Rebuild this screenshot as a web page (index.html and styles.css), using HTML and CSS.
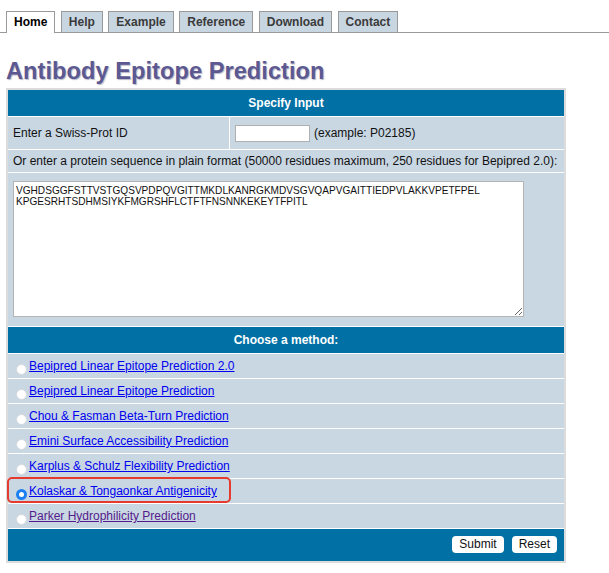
FILE: index.html
```html
<!DOCTYPE html>
<html>
<head>
<meta charset="utf-8">
<title>Antibody Epitope Prediction</title>
<link rel="stylesheet" href="styles.css">
</head>
<body>
<nav class="tabs">
  <a class="tab active">Home</a>
  <a class="tab">Help</a>
  <a class="tab">Example</a>
  <a class="tab">Reference</a>
  <a class="tab">Download</a>
  <a class="tab">Contact</a>
</nav>
<h1 class="title">Antibody Epitope Prediction</h1>
<form class="panel">
  <div class="bar">Specify Input</div>
  <div class="row split">
    <div class="cell label">Enter a Swiss-Prot ID</div>
    <div class="cell field"><input class="idbox" type="text"><span>(example: P02185)</span></div>
  </div>
  <div class="row note">Or enter a protein sequence in plain format (50000 residues maximum, 250 residues for Bepipred 2.0):</div>
  <div class="row seqrow"><textarea class="seq">VGHDSGGFSTTVSTGQSVPDPQVGITTMKDLKANRGKMDVSGVQAPVGAITTIEDPVLAKKVPETFPEL
KPGESRHTSDHMSIYKFMGRSHFLCTFTFNSNNKEKEYTFPITL</textarea></div>
  <div class="bar bar2">Choose a method:</div>
  <label class="row method"><input type="radio" name="m"><a href="#">Bepipred Linear Epitope Prediction 2.0</a></label>
  <label class="row method"><input type="radio" name="m"><a href="#">Bepipred Linear Epitope Prediction</a></label>
  <label class="row method"><input type="radio" name="m"><a href="#">Chou &amp; Fasman Beta-Turn Prediction</a></label>
  <label class="row method"><input type="radio" name="m"><a href="#">Emini Surface Accessibility Prediction</a></label>
  <label class="row method"><input type="radio" name="m"><a href="#">Karplus &amp; Schulz Flexibility Prediction</a></label>
  <label class="row method hl"><input type="radio" name="m" checked><a href="#">Kolaskar &amp; Tongaonkar Antigenicity</a><span class="mark"></span></label>
  <label class="row method"><input type="radio" name="m"><a href="#" class="visited">Parker Hydrophilicity Prediction</a></label>
  <div class="bar actions">
    <button type="button" class="btn">Submit</button>
    <button type="reset" class="btn">Reset</button>
  </div>
</form>
</body>
</html>
```
FILE: styles.css
```css
html, body {
  margin: 0;
  padding: 0;
  background: #fff;
  font-family: "Liberation Sans", Arial, sans-serif;
  font-size: 12px;
  color: #111;
}

.tabs {
  display: flex;
  gap: 5.5px;
  margin-top: 11px;
  padding-left: 6px;
  border-bottom: 1px solid #9a9a9a;
  height: 21px;
}

.tab {
  display: block;
  box-sizing: border-box;
  height: 21px;
  line-height: 20px;
  padding: 0 7px;
  border: 1px solid #9a9a9a;
  border-bottom: none;
  background: #c8d6e2;
  color: #3a3a3a;
  font-weight: bold;
  font-size: 12px;
  text-decoration: none;
}

.tab.active {
  background: #fff;
  color: #000;
  height: 22px;
}

.title {
  margin: 24px 0 2px 6px;
  font-size: 23.7px;
  line-height: 29px;
  font-weight: bold;
  color: #5c5992;
  text-shadow: 1px 1px 1px #b8b8c8;
}

.panel {
  width: 556px;
  margin-left: 6px;
  border: 2px solid #dcdcdc;
  background: #fff;
}

.bar {
  background: #0070a5;
  color: #fff;
  font-weight: bold;
  text-align: center;
  height: 26px;
  line-height: 26px;
}

.bar2 {
  margin-top: 1px;
}

.row {
  background: #c9d7e3;
  margin-top: 1px;
}

.split {
  display: flex;
  height: 32px;
}

.cell {
  display: flex;
  align-items: center;
}

.label {
  width: 216px;
  padding-left: 5px;
  border-right: 1px solid #fff;
}

.field {
  padding-left: 5px;
  gap: 4px;
}

.idbox {
  box-sizing: border-box;
  width: 75px;
  height: 17px;
  margin: 1px 0 0 0;
  border: 1px solid #b0b0b0;
  background: #fff;
  font-size: 11px;
}

.note {
  height: 22px;
  line-height: 22px;
  padding-left: 5px;
  white-space: nowrap;
}

.seqrow {
  height: 153px;
  padding: 8px 0 0 5px;
  box-sizing: border-box;
}

.seq {
  box-sizing: border-box;
  display: block;
  width: 511px;
  height: 136px;
  margin: 0;
  padding: 4px 2px;
  border: 1px solid #b4b4b4;
  font-family: "Liberation Sans", Arial, sans-serif;
  font-size: 10.1px;
  line-height: 10.5px;
  color: #111;
  resize: both;
}

.method {
  position: relative;
  display: flex;
  align-items: center;
  height: 24px;
  padding-left: 8px;
}

.method input {
  appearance: none;
  -webkit-appearance: none;
  box-sizing: border-box;
  width: 11px;
  height: 11px;
  margin: 7px 2px 0 0;
  border-radius: 50%;
  background: #fff;
  border: 1px solid #d4d8dc;
}

.method input:checked {
  background: #fff;
  border: 3.5px solid #1c7ff2;
}

.method a {
  color: #0000ee;
  text-decoration: underline;
}

.method a.visited {
  color: #551a8b;
}

.mark {
  position: absolute;
  left: -1px;
  top: -2px;
  width: 224px;
  height: 26px;
  box-sizing: border-box;
  border: 2px solid #e53a2e;
  border-radius: 5px;
  pointer-events: none;
}

.actions {
  margin-top: 1px;
  height: 32px;
  display: flex;
  justify-content: flex-end;
  align-items: flex-start;
  gap: 8px;
  padding: 7px 7px 0 0;
  box-sizing: border-box;
}

.btn {
  height: 17px;
  padding: 0 7px;
  border: none;
  border-radius: 4px;
  background: #fff;
  color: #111;
  font-family: "Liberation Sans", Arial, sans-serif;
  font-size: 12px;
  line-height: 17px;
  font-weight: normal;
}
```
